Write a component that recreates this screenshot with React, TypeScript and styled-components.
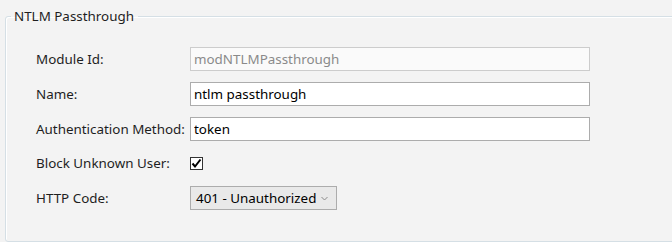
import React, { useState } from 'react'
import styled, { createGlobalStyle } from 'styled-components'

const GlobalStyle = createGlobalStyle`
  html, body {
    margin: 0;
    padding: 0;
    background: #f3f3f3;
    overflow: hidden;
  }
  body {
    font-family: 'Noto Sans', 'Open Sans', sans-serif;
    font-size: 13.4px;
    color: #1e1e1e;
  }
`

const Page = styled.div`
  width: 672px;
  height: 242px;
  overflow: hidden;
`

const Group = styled.fieldset`
  box-sizing: border-box;
  margin: 6px 0 0 5px;
  width: 700px;
  height: 236px;
  padding: 0;
  border: 1px solid #d5dfe5;
  border-radius: 3px;
  box-shadow: inset 1px 1px 0 #ffffff;
`

const Legend = styled.legend`
  padding: 0 4px 0 3px;
  margin-left: 5px;
  font-size: 13.4px;
  line-height: 20px;
  color: #1e1e1e;
`

const FormGrid = styled.div`
  display: grid;
  grid-template-columns: 154px 400px;
  grid-auto-rows: 24px;
  row-gap: 10.75px;
  align-items: center;
  padding: 21px 0 0 30px;
`

const Label = styled.label`
  font-size: 13.4px;
  line-height: 24px;
  white-space: nowrap;
`

const TextBox = styled.input`
  box-sizing: border-box;
  width: 400px;
  height: 24px;
  margin: 0;
  padding: 0 3px;
  font-family: inherit;
  font-size: 13.4px;
  color: #000;
  background: #fff;
  border: 1px solid #acacac;
  border-radius: 0;
  outline: none;

  &:disabled {
    color: #8a8a8a;
    background: #fafafa;
    border-color: #cccccc;
  }
`

const CheckBox = styled.span`
  box-sizing: border-box;
  width: 13px;
  height: 13px;
  border: 1px solid #333;
  background: #fff;
  display: flex;
  align-items: center;
  justify-content: center;
  cursor: default;
`

const Dropdown = styled.div`
  box-sizing: border-box;
  width: 147px;
  height: 24px;
  display: flex;
  align-items: center;
  justify-content: space-between;
  padding: 0 8px 0 5px;
  background: #e9e9e9;
  border: 1px solid #acacac;
  font-size: 13.4px;
  color: #000;
`

const Chevron = () => (
  <svg width="7" height="5" viewBox="0 0 7 5">
    <path d="M0.5 1 L3.5 4 L6.5 1" fill="none" stroke="#8a8a8a" strokeWidth="1" />
  </svg>
)

const App = () => {
  const [blockUnknown, setBlockUnknown] = useState(true)

  return (
    <>
      <GlobalStyle />
      <Page>
        <Group>
          <Legend>NTLM Passthrough</Legend>
          <FormGrid>
            <Label>Module Id:</Label>
            <TextBox value="modNTLMPassthrough" disabled readOnly />

            <Label>Name:</Label>
            <TextBox defaultValue="ntlm passthrough" />

            <Label>Authentication Method:</Label>
            <TextBox defaultValue="token" />

            <Label>Block Unknown User:</Label>
            <CheckBox onClick={() => setBlockUnknown(!blockUnknown)}>
              {blockUnknown && (
                <svg width="11" height="11" viewBox="0 0 11 11">
                  <path d="M1.5 5.5 L4 8.5 L9.5 1.5" fill="none" stroke="#000" strokeWidth="2" />
                </svg>
              )}
            </CheckBox>

            <Label>HTTP Code:</Label>
            <Dropdown>
              <span>401 - Unauthorized</span>
              <Chevron />
            </Dropdown>
          </FormGrid>
        </Group>
      </Page>
    </>
  )
}

export default App
